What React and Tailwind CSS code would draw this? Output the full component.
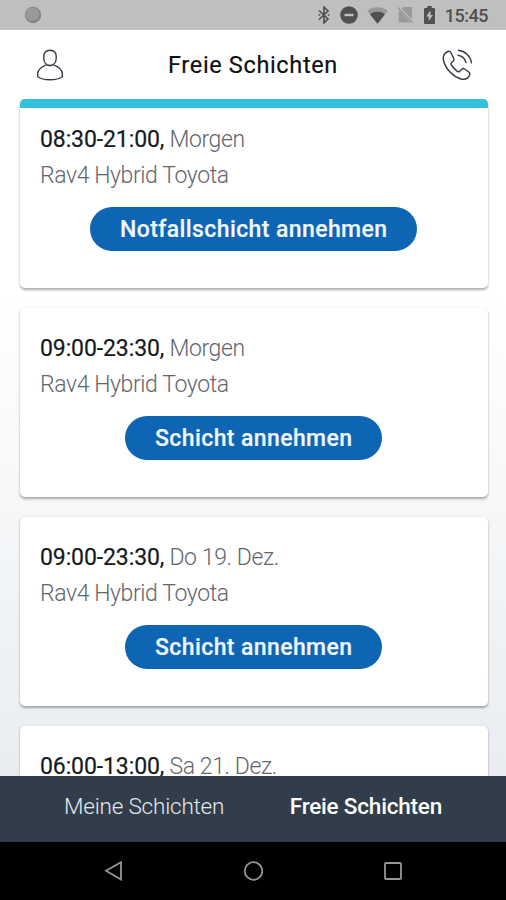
import React, { useState } from "react";

const shifts = [
  {
    time: "08:30-21:00,",
    day: "Morgen",
    car: "Rav4 Hybrid Toyota",
    action: "Notfallschicht annehmen",
    urgent: true,
  },
  {
    time: "09:00-23:30,",
    day: "Morgen",
    car: "Rav4 Hybrid Toyota",
    action: "Schicht annehmen",
  },
  {
    time: "09:00-23:30,",
    day: "Do 19. Dez.",
    car: "Rav4 Hybrid Toyota",
    action: "Schicht annehmen",
  },
  {
    time: "06:00-13:00,",
    day: "Sa 21. Dez.",
  },
];

function StatusBar() {
  return (
    <div className="flex h-[30px] shrink-0 items-center bg-[#bfbfbf] pl-6 pr-[18px] text-[#505050]">
      <svg className="h-[18px] w-[18px]" viewBox="0 0 18 18">
        <circle cx="9" cy="9" r="8.2" fill="#858585" />
        <circle cx="8.3" cy="8.3" r="6.8" fill="#999999" />
      </svg>
      <svg className="ml-auto h-[18px] w-3" viewBox="0 0 12 18" fill="none" stroke="currentColor" strokeWidth="1.7">
        <path d="M1 4.5 10 13 6 16.8V1.2L10 5 1 13.5" />
        <path d="M.6 9h1.6M9.8 9h1.6" />
      </svg>
      <svg className="ml-[10px] h-[18px] w-[18px]" viewBox="0 0 18 18">
        <circle cx="9" cy="9" r="8.8" fill="currentColor" />
        <path d="M4.5 9h9" stroke="#bfbfbf" strokeWidth="2.4" />
      </svg>
      <svg className="ml-[9px] h-[17px] w-[21px]" viewBox="0 0 21 17">
        <path d="M.3 3.8C6.2-.8 14.8-.8 20.7 3.8L10.5 16.7z" fill="#999999" />
        <path d="M3 7.2c4.5-3.2 10.5-3.2 15 0l-7.5 9.5z" fill="currentColor" />
      </svg>
      <svg className="ml-[9px] h-[18px] w-[17px]" viewBox="0 0 17 18">
        <path d="M6.5 1H15v12.3L4.8 2.7zM1.8 4.3 13.8 16.5H1.8z" fill="#999999" />
        <path d="M.8 1.5 16 17" stroke="#999999" strokeWidth="1.5" />
      </svg>
      <svg className="ml-[10px] h-[18px] w-[11px]" viewBox="0 0 11 18">
        <path
          d="M3.3 0h4.4v2H10q1 0 1 1v14q0 1-1 1H1q-1 0-1-1V3q0-1 1-1h2.3zM6.5 4.5 2.2 10.5h2.5V15L9 9H6.5z"
          fill="currentColor"
          fillRule="evenodd"
        />
      </svg>
      <span className="ml-[10px] pt-[2px] text-[18px] font-medium leading-none tracking-[-0.5px]">
        15:45
      </span>
    </div>
  );
}

function Header() {
  return (
    <header className="flex h-[69px] shrink-0 items-center justify-between bg-white pl-9 pr-[33px]">
      <svg className="h-[32px] w-[28px]" viewBox="0 0 28 32" fill="none" stroke="#343a46" strokeWidth="1.4">
        <path d="M14 1.2c4 0 6.3 2.8 6.3 7 0 4.7-2.3 8.3-6.3 8.3s-6.3-3.6-6.3-8.3c0-4.2 2.3-7 6.3-7z" />
        <path d="M10.3 15.8C5 18 1.7 20.3 1.7 24.5v3.2c2.7 2 7.2 3 12.3 3s9.6-1 12.3-3v-3.2c0-4.2-3.3-6.5-8.6-8.7" />
      </svg>
      <h1 className="pl-px pt-[3px] text-[23.5px] leading-none tracking-[0.65px] text-[#111111] [-webkit-text-stroke:0.2px]">
        Freie Schichten
      </h1>
      <svg className="h-[32px] w-[32px]" viewBox="0 0 32 32" fill="none" stroke="#343a46" strokeWidth="1.4" strokeLinecap="round" strokeLinejoin="round">
        <path d="M7 2.5c-3.5 1.5-5.5 4.5-4.5 9C4.5 20 12 27.5 20 30c4.5 1 7.5-.8 8.7-4.3.4-1.2 0-2-1-2.7l-4-3c-1-.7-2.2-.6-3 .3l-1.8 1.9c-.8.8-1.6.8-2.5.1-2.6-1.8-4.3-3.7-6-6.3-.6-1-.5-1.8.3-2.5l1.5-1.4c.9-.9 1-1.9.4-3L9.8 3.5C9.2 2.4 8.3 2 7 2.5z" />
        <path d="M17.5 1.2c6.5.5 12 6 13 12.6M17 6.3c4 .6 7 3.3 8 7.3" />
      </svg>
    </header>
  );
}

function ShiftCard({ shift }) {
  return (
    <article className="flex h-[189px] shrink-0 flex-col overflow-hidden rounded-[5px] bg-white shadow-[0_1.5px_2.5px_rgba(0,0,0,0.32)]">
      <div className={shift.urgent ? "h-[9px] bg-[#35bfdc]" : "h-[9px]"} />
      <div className="flex flex-col px-5 pt-[14px]">
        <p className="whitespace-pre text-[23px] leading-[36px] text-[#62666c]">
          <span className="tracking-[-0.1px] text-[#151a20] [-webkit-text-stroke:0.2px]">
            {shift.time}
          </span>
          <span className="font-light tracking-[-0.4px]"> {shift.day}</span>
        </p>
        {shift.car && (
          <p className="text-[23px] font-light leading-[36px] tracking-[-0.4px] text-[#62666c]">
            {shift.car}
          </p>
        )}
        {shift.action && (
          <button className="mt-[13px] h-[44px] self-center rounded-full bg-[#0d65b3] px-[30px] text-[23px] font-medium leading-none tracking-[0.4px] text-[#f2f7ff] [-webkit-text-stroke:0.2px]">
            {shift.action}
          </button>
        )}
      </div>
    </article>
  );
}

function TabBar({ tab, setTab }) {
  return (
    <nav className="flex h-[66px] shrink-0 justify-between bg-[#313d4b] pb-[4px] pl-16 pr-[64px] text-[22.5px] tracking-[-0.2px]">
      <button
        onClick={() => setTab("mine")}
        className={tab === "mine" ? "font-medium text-white" : "font-light text-[#e4e8ec]"}
      >
        Meine Schichten
      </button>
      <button
        onClick={() => setTab("free")}
        className={tab === "free" ? "font-medium text-white" : "font-light text-[#e4e8ec]"}
      >
        Freie Schichten
      </button>
    </nav>
  );
}

function SystemNav() {
  return (
    <div className="flex h-[58px] shrink-0 items-center justify-between bg-black px-[103px]">
      <svg className="h-5 w-5" viewBox="0 0 20 20" fill="none" stroke="#959595" strokeWidth="1.8">
        <path d="M18 1.2v17.3L3 9.8z" />
      </svg>
      <svg className="h-5 w-5" viewBox="0 0 20 20" fill="none" stroke="#959595" strokeWidth="1.8">
        <circle cx="10.5" cy="10" r="8.8" />
      </svg>
      <svg className="h-5 w-5" viewBox="0 0 20 20" fill="none" stroke="#959595" strokeWidth="1.8">
        <rect x="2" y="2" width="16" height="16" rx="1" />
      </svg>
    </div>
  );
}

export default function App() {
  const [tab, setTab] = useState("free");

  return (
    <div className="flex h-[900px] w-[506px] flex-col overflow-hidden font-['Roboto',sans-serif]">
      <StatusBar />
      <Header />
      <main className="flex min-h-0 flex-1 flex-col gap-[20.1px] overflow-hidden bg-linear-to-b from-white from-30% to-[#e9edf1] pl-5 pr-[18.5px] pt-[0.2px]">
        {shifts.map((shift, i) => (
          <ShiftCard key={i} shift={shift} />
        ))}
      </main>
      <TabBar tab={tab} setTab={setTab} />
      <SystemNav />
    </div>
  );
}
